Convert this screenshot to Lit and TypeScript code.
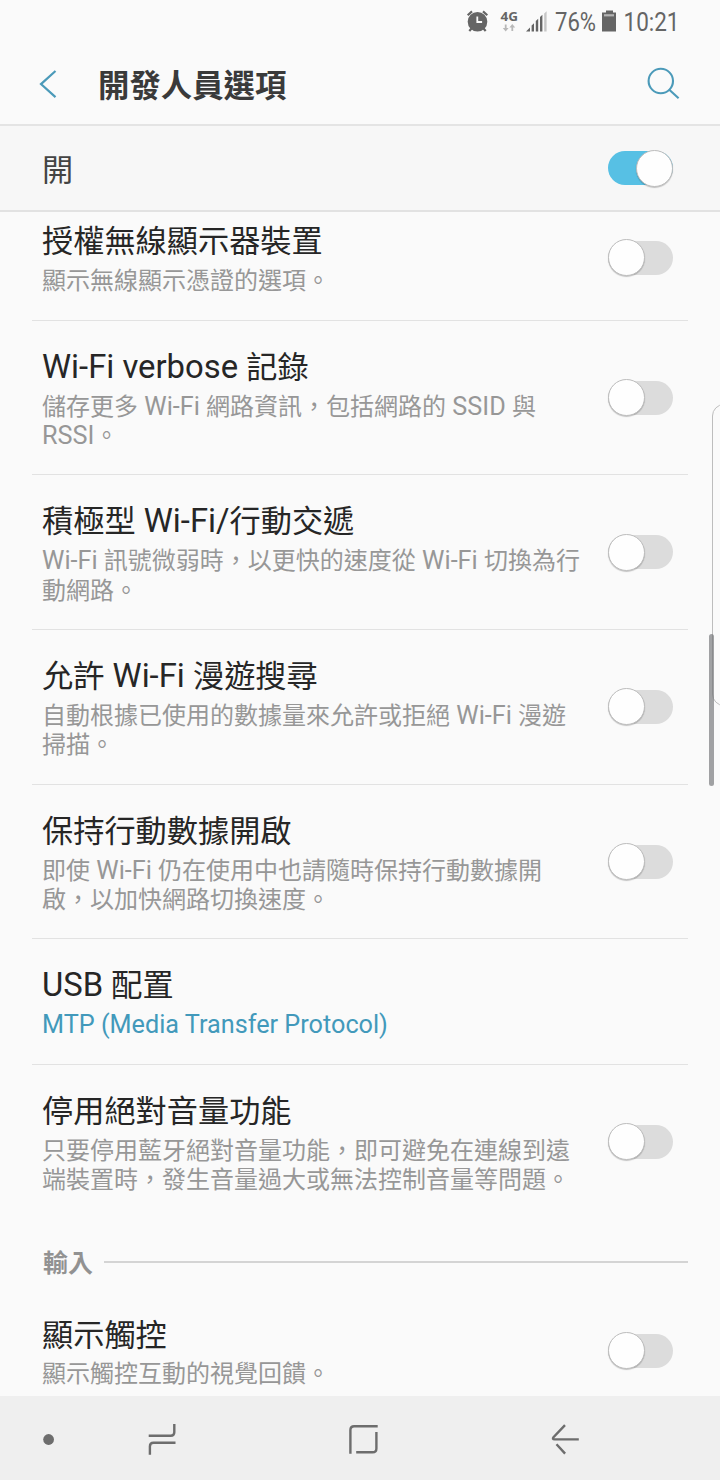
import { LitElement, html, css, nothing } from "lit";
import { customElement, property } from "lit/decorators.js";

interface Setting {
  title: string;
  lines: string[];
  toggle?: boolean;
  link?: boolean;
  last?: boolean;
}

const NETWORK: Setting[] = [
  { title: "授權無線顯示器裝置", lines: ["顯示無線顯示憑證的選項。"], toggle: true },
  { title: "Wi-Fi verbose 記錄", lines: ["儲存更多 Wi-Fi 網路資訊，包括網路的 SSID 與", "RSSI。"], toggle: true },
  { title: "積極型 Wi-Fi/行動交遞", lines: ["Wi-Fi 訊號微弱時，以更快的速度從 Wi-Fi 切換為行", "動網路。"], toggle: true },
  { title: "允許 Wi-Fi 漫遊搜尋", lines: ["自動根據已使用的數據量來允許或拒絕 Wi-Fi 漫遊", "掃描。"], toggle: true },
  { title: "保持行動數據開啟", lines: ["即使 Wi-Fi 仍在使用中也請隨時保持行動數據開", "啟，以加快網路切換速度。"], toggle: true },
  { title: "USB 配置", lines: ["MTP (Media Transfer Protocol)"], link: true },
  { title: "停用絕對音量功能", lines: ["只要停用藍牙絕對音量功能，即可避免在連線到遠", "端裝置時，發生音量過大或無法控制音量等問題。"], toggle: true, last: true },
];

const INPUT: Setting[] = [
  { title: "顯示觸控", lines: ["顯示觸控互動的視覺回饋。"], toggle: true, last: true },
];

/* Latin runs are set slightly larger than the CJK glyphs around them. */
const mixed = (text: string) =>
  text
    .split(/([\x20-\x7e]+)/)
    .filter(Boolean)
    .map((part) => (/^[\x20-\x7e]/.test(part) ? html`<span class="latin">${part}</span>` : part));

@customElement("toggle-switch")
class ToggleSwitch extends LitElement {
  @property({ type: Boolean, reflect: true }) on = false;

  static styles = css`
    :host {
      display: flex;
      flex: none;
      align-items: center;
      box-sizing: border-box;
      width: 65px;
      height: 34px;
      border-radius: 17px;
      background: #dcdcdc;
    }
    :host([on]) {
      justify-content: flex-end;
      background: #57c0e4;
    }
    .thumb {
      flex: none;
      box-sizing: border-box;
      width: 37px;
      height: 37px;
      border: 1px solid #bdbdbd;
      border-radius: 50%;
      background: #fefefe;
      box-shadow: 0 1px 1px rgba(0, 0, 0, 0.22);
    }
  `;

  render() {
    return html`<span class="thumb"></span>`;
  }
}

@customElement("app-root")
class AppRoot extends LitElement {
  static styles = css`
    :host {
      position: relative;
      display: flex;
      flex-direction: column;
      width: 720px;
      height: 1480px;
      overflow: hidden;
      background: #fafafa;
      color: #262626;
      font-family: Roboto, "Noto Sans CJK TC", sans-serif;
    }
    svg {
      display: block;
      flex: none;
    }
    .status {
      flex: none;
      height: 44px;
      display: flex;
      justify-content: flex-end;
    }
    .header {
      flex: none;
      box-sizing: border-box;
      height: 82px;
      padding: 0 40px 0 38px;
      display: flex;
      align-items: center;
      border-bottom: 2px solid #e4e4e4;
    }
    .heading {
      flex: 1;
      margin-left: 40px;
      padding-top: 6px;
      font-size: 31.4px;
      line-height: 40px;
      font-weight: 700;
      color: #3a3a3a;
    }
    .master {
      flex: none;
      box-sizing: border-box;
      height: 86px;
      padding: 0 47px 0 42px;
      display: flex;
      align-items: center;
      justify-content: space-between;
      border-bottom: 2px solid #e2e2e2;
      background: #f7f7f7;
      font-size: 31.2px;
      line-height: 40px;
      color: #444;
    }
    .state {
      padding-top: 6px;
    }
    .viewport {
      flex: 1;
      min-height: 0;
      overflow: hidden;
    }
    .list {
      margin-top: -16.6px;
      padding: 0 32px;
    }
    .row {
      box-sizing: border-box;
      padding: 28px 15px 23.2px 10px;
      display: flex;
      align-items: center;
      justify-content: space-between;
      border-bottom: 1px solid #e2e2e2;
    }
    .row.last {
      border-bottom-color: transparent;
    }
    .copy {
      white-space: nowrap;
    }
    .latin {
      font-size: 1.052em;
      line-height: 0;
    }
    .title {
      height: 38px;
      font-size: 31.2px;
      line-height: 38px;
    }
    .sub {
      margin-top: 5.9px;
      font-size: 24px;
      line-height: 29.3px;
      color: #979797;
    }
    .line {
      height: 29.3px;
    }
    .sub.link {
      color: #4299bb;
    }
    .row toggle-switch {
      margin-top: -5px;
    }
    .section {
      height: 69px;
      padding: 0 0 0 11px;
      display: flex;
      align-items: center;
      gap: 11px;
      font-size: 25px;
      line-height: 30px;
      font-weight: 700;
      color: #929292;
    }
    .section .name {
      padding-top: 19px;
    }
    .rule {
      flex: 1;
      height: 2px;
      margin-top: 15px;
      background: #d4d4d4;
    }
    .nav {
      flex: none;
      height: 84px;
      background: #efefef;
    }
    .edge {
      position: absolute;
      left: 712px;
      top: 404px;
      box-sizing: border-box;
      width: 30px;
      height: 302px;
      border: 1.5px solid #bdbdbd;
      border-radius: 12px;
    }
    .scroll {
      position: absolute;
      left: 709px;
      top: 634px;
      width: 5px;
      height: 152px;
      border-radius: 2.5px;
      background: rgba(110, 111, 114, 0.64);
    }
  `;

  private row(s: Setting) {
    return html`<div class="row ${s.last ? "last" : ""}">
      <div class="copy">
        <div class="title">${mixed(s.title)}</div>
        <div class="sub ${s.link ? "link" : ""}">${s.lines.map((l) => html`<div class="line">${mixed(l)}</div>`)}</div>
      </div>
      ${s.toggle ? html`<toggle-switch></toggle-switch>` : nothing}
    </div>`;
  }

  render() {
    return html`
      <div class="status">
        <svg width="270" height="44" viewBox="450 0 270 44" fill="#656565">
          <circle cx="477.5" cy="21.8" r="9.8" />
          <path d="M467.7 15.2l4.3-3.8M487.3 15.2l-4.3-3.8M471.5 28.5l-2.2 2.5M483.5 28.5l2.2 2.5" stroke="#656565" stroke-width="2.2" fill="none" />
          <path d="M477.3 16.5v5.5h4.8" stroke="#fafafa" stroke-width="1.8" fill="none" />
          <text x="500.5" y="21.3" font-size="13" font-weight="700" textLength="17.5" lengthAdjust="spacingAndGlyphs" font-family="Noto Sans, sans-serif">4G</text>
          <path d="M504.8 24.5h1.8v3.5h2l-2.9 3.4-2.9-3.4h2zM511.4 31v-3.5h-2l2.9-3.4 2.9 3.4h-2V31z" fill="#b8b8b8" />
          <path d="M526 31.5l4-4v4zM531.6 25.5l2.4-2.3v8.3h-2.4zM535.8 21l2.4-2.3v12.8h-2.4zM540 17l2.4-2.3v16.8H540z" />
          <path d="M544.2 13.5l2.4-2.3v20.3h-2.4z" fill="#c6c6c6" />
          <text x="555" y="31.3" font-size="26" textLength="41" lengthAdjust="spacingAndGlyphs">76%</text>
          <path d="M606 10.5h7v2h3V31.5h-14V12.5h4z" />
          <path d="M604 14.2h10v2.2h-10z" fill="#b4b4b4" />
          <text x="623.5" y="31.3" font-size="26" textLength="56" lengthAdjust="spacingAndGlyphs">10:21</text>
        </svg>
      </div>
      <div class="header">
        <svg width="20" height="32" viewBox="38 68.5 20 32" fill="none" stroke="#4b9ab9" stroke-width="2.2">
          <path d="M55.5 71.5L41 84.6l14.5 13" />
        </svg>
        <div class="heading">開發人員選項</div>
        <svg width="34" height="34" viewBox="646 67 34 34" fill="none" stroke="#4b9ab9" stroke-width="2.1">
          <circle cx="660.8" cy="81" r="12.2" />
          <path d="M669.3 89.7l9.3 8.6" />
        </svg>
      </div>
      <div class="master"><span class="state">開</span><toggle-switch on></toggle-switch></div>
      <div class="viewport">
        <div class="list">
          ${NETWORK.map((s) => this.row(s))}
          <div class="section"><span class="name">輸入</span><span class="rule"></span></div>
          ${INPUT.map((s) => this.row(s))}
        </div>
      </div>
      <div class="nav">
        <svg width="720" height="84" viewBox="0 1396 720 84" fill="none" stroke="#6d6d6d" stroke-width="2.4">
          <circle cx="48.6" cy="1439.5" r="5.4" fill="#6d6d6d" stroke="none" />
          <path d="M148.7 1435.8h22q3.6 0 3.6-3.6v-8.2M175.5 1442.8h-22q-3.6 0-3.6 3.6v8.4" />
          <path d="M377.7 1426.3h-23.5q-3.8 0-3.8 3.8v23.7M376.4 1432v16.4q0 3.8-3.8 3.8h-16.4" />
          <path d="M565 1425.2l-11.5 12q-1.5 2.2 1 2.2h24.3M556.5 1444.2l8.6 9.4" />
        </svg>
      </div>
      <div class="edge"></div>
      <div class="scroll"></div>
    `;
  }
}
